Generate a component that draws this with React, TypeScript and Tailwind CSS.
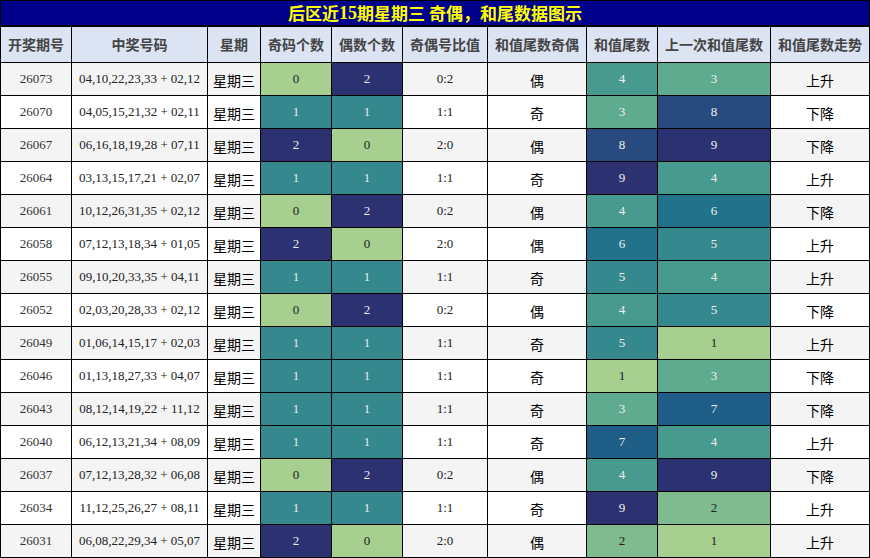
import React from "react";

type Row = {
  id: string;
  nums: string;
  odd: number;
  even: number;
  ratio: string;
  sumOE: string;
  tail: number;
  prev: number;
  trend: string;
};

const rows: Row[] = [
  { id: "26073", nums: "04,10,22,23,33 + 02,12", odd: 0, even: 2, ratio: "0:2", sumOE: "偶", tail: 4, prev: 3, trend: "上升" },
  { id: "26070", nums: "04,05,15,21,32 + 02,11", odd: 1, even: 1, ratio: "1:1", sumOE: "奇", tail: 3, prev: 8, trend: "下降" },
  { id: "26067", nums: "06,16,18,19,28 + 07,11", odd: 2, even: 0, ratio: "2:0", sumOE: "偶", tail: 8, prev: 9, trend: "下降" },
  { id: "26064", nums: "03,13,15,17,21 + 02,07", odd: 1, even: 1, ratio: "1:1", sumOE: "奇", tail: 9, prev: 4, trend: "上升" },
  { id: "26061", nums: "10,12,26,31,35 + 02,12", odd: 0, even: 2, ratio: "0:2", sumOE: "偶", tail: 4, prev: 6, trend: "下降" },
  { id: "26058", nums: "07,12,13,18,34 + 01,05", odd: 2, even: 0, ratio: "2:0", sumOE: "偶", tail: 6, prev: 5, trend: "上升" },
  { id: "26055", nums: "09,10,20,33,35 + 04,11", odd: 1, even: 1, ratio: "1:1", sumOE: "奇", tail: 5, prev: 4, trend: "上升" },
  { id: "26052", nums: "02,03,20,28,33 + 02,12", odd: 0, even: 2, ratio: "0:2", sumOE: "偶", tail: 4, prev: 5, trend: "下降" },
  { id: "26049", nums: "01,06,14,15,17 + 02,03", odd: 1, even: 1, ratio: "1:1", sumOE: "奇", tail: 5, prev: 1, trend: "上升" },
  { id: "26046", nums: "01,13,18,27,33 + 04,07", odd: 1, even: 1, ratio: "1:1", sumOE: "奇", tail: 1, prev: 3, trend: "下降" },
  { id: "26043", nums: "08,12,14,19,22 + 11,12", odd: 1, even: 1, ratio: "1:1", sumOE: "奇", tail: 3, prev: 7, trend: "下降" },
  { id: "26040", nums: "06,12,13,21,34 + 08,09", odd: 1, even: 1, ratio: "1:1", sumOE: "奇", tail: 7, prev: 4, trend: "上升" },
  { id: "26037", nums: "07,12,13,28,32 + 06,08", odd: 0, even: 2, ratio: "0:2", sumOE: "偶", tail: 4, prev: 9, trend: "下降" },
  { id: "26034", nums: "11,12,25,26,27 + 08,11", odd: 1, even: 1, ratio: "1:1", sumOE: "奇", tail: 9, prev: 2, trend: "上升" },
  { id: "26031", nums: "06,08,22,29,34 + 05,07", odd: 2, even: 0, ratio: "2:0", sumOE: "偶", tail: 2, prev: 1, trend: "上升" },
];

const tailColor: Record<number, string> = {
  0: "bg-[#b8d99a] text-[#222]",
  1: "bg-[#a6cf90] text-[#222]",
  2: "bg-[#7fbb8f] text-[#222]",
  3: "bg-[#5fab90] text-[#eef2ee]",
  4: "bg-[#489a8f] text-[#eef2ee]",
  5: "bg-[#35888e] text-[#eef2ee]",
  6: "bg-[#21728a] text-[#eef2ee]",
  7: "bg-[#1f5e87] text-[#eef2ee]",
  8: "bg-[#284a7e] text-[#eef2ee]",
  9: "bg-[#2c3172] text-[#eef2ee]",
};

const countColor: Record<number, string> = {
  0: "bg-[#a6cf90] text-[#222]",
  1: "bg-[#35888e] text-[#e6ecec]",
  2: "bg-[#2c3172] text-[#e6ecec]",
};

const headers = [
  "开奖期号",
  "中奖号码",
  "星期",
  "奇码个数",
  "偶数个数",
  "奇偶号比值",
  "和值尾数奇偶",
  "和值尾数",
  "上一次和值尾数",
  "和值尾数走势",
];

const serif = "font-['Liberation_Serif','DejaVu_Serif',serif]";
const cjk = "font-['Noto_Sans_CJK_SC','Noto_Sans',sans-serif]";

export default function App() {
  return (
    <div className="w-[870px] h-[558px] border border-black bg-black overflow-hidden">
      <div
        className={`h-[24px] bg-[#00008b] border-b-2 border-black box-content flex items-center justify-center text-[#ffff00] font-bold text-[17px] ${cjk}`}
      >
        后区近<span className={`${serif} text-[18px]`}>15</span>期星期三 奇偶，和尾数据图示
      </div>
      <div className="grid grid-cols-[70px_135px_52px_70px_70px_84px_98px_70px_112px_98px] grid-rows-[35px_repeat(15,32px)] gap-px bg-black">
        {headers.map((h) => (
          <div
            key={h}
            className={`bg-[#dce3f2] flex items-center justify-center text-[14px] font-bold text-[#444] ${cjk}`}
          >
            {h}
          </div>
        ))}
        {rows.map((r, i) => {
          const bg = i % 2 === 0 ? "bg-[#f4f4f4]" : "bg-white";
          return (
            <React.Fragment key={r.id}>
              <div className={`${bg} flex items-center justify-center text-[13px] text-[#333] ${serif}`}>
                {r.id}
              </div>
              <div className={`${bg} flex items-center justify-center text-[13px] text-[#222] ${serif}`}>
                {r.nums}
              </div>
              <div className={`${bg} flex items-center justify-center pt-[2px] text-[14px] text-black ${cjk}`}>
                星期三
              </div>
              <div className={`${countColor[r.odd]} flex items-center justify-center text-[13px] ${serif}`}>
                {r.odd}
              </div>
              <div className={`${countColor[r.even]} flex items-center justify-center text-[13px] ${serif}`}>
                {r.even}
              </div>
              <div className={`${bg} flex items-center justify-center text-[13px] text-[#222] ${serif}`}>
                {r.ratio}
              </div>
              <div className={`${bg} flex items-center justify-center pt-[2px] text-[14px] text-black ${cjk}`}>
                {r.sumOE}
              </div>
              <div className={`${tailColor[r.tail]} flex items-center justify-center text-[13px] ${serif}`}>
                {r.tail}
              </div>
              <div className={`${tailColor[r.prev]} flex items-center justify-center text-[13px] ${serif}`}>
                {r.prev}
              </div>
              <div className={`${bg} flex items-center justify-center pt-[2px] text-[14px] text-black ${cjk}`}>
                {r.trend}
              </div>
            </React.Fragment>
          );
        })}
      </div>
    </div>
  );
}
